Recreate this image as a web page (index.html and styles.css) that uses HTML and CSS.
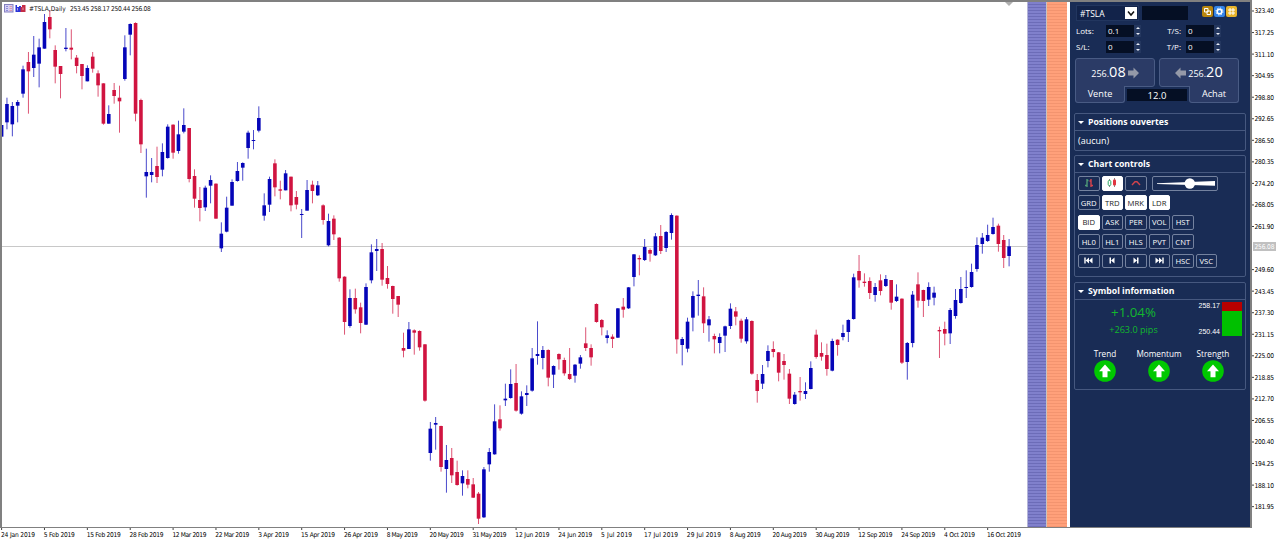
FILE: index.html
```html
<!DOCTYPE html>
<html lang="fr">
<head>
  <meta charset="UTF-8">
  <meta name="viewport" content="width=device-width, initial-scale=1.0">
  <title>#TSLA,Daily</title>
  <link rel="stylesheet" href="styles.css">
</head>
<body>
  <div class="workspace">
    <div class="plot">
      <svg id="chart" width="1025" height="525" viewBox="2 2 1025 525"></svg>
      <div class="chart-title">
        <svg class="title-icons" width="24" height="9" viewBox="0 0 24 9">
          <rect x="0.5" y="0.5" width="8.5" height="7.5" fill="#d5d0f5" stroke="#8580c0"/>
          <path d="M2 2.5h2M2 4.5h2M2 6.5h2" stroke="#5f60c8" stroke-width="0.6"/>
          <path d="M5.5 2.5h2.5M5.5 4.5h2.5M5.5 6.5h2.5" stroke="#e08a9a" stroke-width="0.8"/>
          <path d="M11.5 1h1.5v2h2V2h2v6h-5.500z" fill="#2a35d8"/>
          <path d="M16.500 3h1.500V1h3.500v7h-5z" fill="#c52c45"/>
          <path d="M13.500 4v2.500M19 3.500v2.500" stroke="#e8c8e0" stroke-width="0.7"/>
        </svg>
        <span class="chart-name">#TSLA,Daily</span>
        <span class="chart-ohlc">253.45 258.17 250.44 256.08</span>
      </div>
    </div>
    <div class="strip strip-blue"></div>
    <div class="strip strip-coral"></div>

    <div class="panel">
      <div class="symbol-row">
        <div class="symbol-select">
          <span>#TSLA</span>
          <div class="select-arrow">
            <svg width="12" height="12" viewBox="0 0 12 12"><path d="M3 4.500l3 3.500 3-3.500" fill="none" stroke="#111" stroke-width="1.500"/></svg>
          </div>
        </div>
        <div class="symbol-input"></div>
        <div class="tools">
          <svg width="11" height="11" viewBox="0 0 11 11">
            <rect width="11" height="11" rx="2" fill="#b8860f"/>
            <path d="M2.500 2.500h3.500v3.500h-3.500zM5 5h3.500v3.500h-3.500z" fill="none" stroke="#fff"/>
          </svg>
          <svg width="11" height="11" viewBox="0 0 11 11">
            <rect width="11" height="11" rx="2" fill="#3484e8"/>
            <circle cx="5.500" cy="5.500" r="2.300" fill="none" stroke="#fff" stroke-width="1.600"/>
            <circle cx="5.500" cy="5.500" r="3.500" fill="none" stroke="#fff" stroke-width="1" stroke-dasharray="1.300 1.450"/>
          </svg>
          <svg width="11" height="11" viewBox="0 0 11 11">
            <rect width="11" height="11" rx="2" fill="#e8b42c"/>
            <path d="M4 2v7M7 2v7M2 4h7M2 7h7" stroke="#fff"/>
          </svg>
        </div>
      </div>

      <div class="fields">
        <label>Lots:</label>
        <div class="field">0.1</div><div class="spin"><i></i><i></i></div>
        <label class="right">T/S:</label>
        <div class="field">0</div><div class="spin"><i></i><i></i></div>
        <label>S/L:</label>
        <div class="field">0</div><div class="spin"><i></i><i></i></div>
        <label class="right">T/P:</label>
        <div class="field">0</div><div class="spin"><i></i><i></i></div>
      </div>

      <div class="trade">
        <div class="quotes">
          <div class="quote">
            <span>256.<b>08</b></span>
            <svg width="11" height="12" viewBox="0 0 11 12"><path d="M0 3.500h5.500V0.500l5.500 5.500-5.500 5.500V8.500H0z" fill="#9499a8"/></svg>
          </div>
          <div class="quote">
            <svg width="11" height="12" viewBox="0 0 11 12"><path d="M11 3.500H5.500V0.500L0 6l5.500 5.500V8.500H11z" fill="#9499a8"/></svg>
            <span>256.<b>20</b></span>
          </div>
        </div>
        <div class="sides">
          <div class="side">Vente</div>
          <div class="spread">12.0</div>
          <div class="side">Achat</div>
        </div>
      </div>

      <div class="box positions">
        <h2>Positions ouvertes</h2>
        <p>(aucun)</p>
      </div>

      <div class="box controls">
        <h2>Chart controls</h2>
        <div class="btn-grid">
          <div class="btn-row">
            <div class="btn">
              <svg width="12" height="10" viewBox="0 0 12 10"><path d="M4 1v8M2 7.500h2M4 2.500h1.500" stroke="#4f9a78" stroke-width="1.400"/><path d="M8 1v8M6.500 3h1.500M8 7.500h2" stroke="#d8434c" stroke-width="1.400"/></svg>
            </div>
            <div class="btn on">
              <svg width="12" height="10" viewBox="0 0 12 10"><path d="M3.500 1v8M8.500 0v9" stroke="#555" stroke-width="0.700"/><rect x="2.200" y="2.500" width="2.600" height="5" rx="1" fill="#fff" stroke="#2da866"/><rect x="7" y="1.500" width="3" height="6" rx="1" fill="#e03540"/></svg>
            </div>
            <div class="btn">
              <svg width="12" height="10" viewBox="0 0 12 10"><path d="M2 7l3-3.300h2L10 7" fill="none" stroke="#d0434c" stroke-width="1.400"/></svg>
            </div>
            <div class="slider">
              <svg width="64" height="13" viewBox="0 0 64 13"><path d="M4 6.300L62 4v4.800L4 7z" fill="#fff"/><circle cx="36.800" cy="6.500" r="5.200" fill="#fff"/></svg>
            </div>
          </div>
          <div class="btn-row">
            <div class="btn">GRD</div><div class="btn on">TRD</div><div class="btn on">MRK</div><div class="btn on">LDR</div>
          </div>
          <div class="btn-row">
            <div class="btn on">BID</div><div class="btn">ASK</div><div class="btn">PER</div><div class="btn">VOL</div><div class="btn">HST</div>
          </div>
          <div class="btn-row">
            <div class="btn">HL0</div><div class="btn">HL1</div><div class="btn">HLS</div><div class="btn">PVT</div><div class="btn">CNT</div>
          </div>
          <div class="btn-row">
            <div class="btn"><svg width="9" height="7" viewBox="0 0 9 7"><path d="M0.300 0.500h1.400v6H0.300zM5 0.500v6L1.700 3.500zM8.500 0.500v6L5 3.500z" fill="#fff"/></svg></div>
            <div class="btn"><svg width="6" height="7" viewBox="0 0 6 7"><path d="M0.500 0.500H2v6H0.500zM5.500 0.500v6L2 3.500z" fill="#fff"/></svg></div>
            <div class="btn"><svg width="6" height="7" viewBox="0 0 6 7"><path d="M4 0.500h1.500v6H4zM0.500 0.500v6L4 3.500z" fill="#fff"/></svg></div>
            <div class="btn"><svg width="9" height="7" viewBox="0 0 9 7"><path d="M7.300 0.500h1.400v6H7.300zM0.500 0.500v6L4 3.500zM4 0.500v6l3.300-3z" fill="#fff"/></svg></div>
            <div class="btn">HSC</div><div class="btn">VSC</div>
          </div>
        </div>
      </div>

      <div class="box info">
        <h2>Symbol information</h2>
        <div class="stats">
          <div class="change">
            <div class="percent">+1.04%</div>
            <div class="pips">+263.0 pips</div>
          </div>
          <div class="range"><span>258.17</span><span>250.44</span></div>
          <div class="range-bar"></div>
        </div>
        <div class="signals">
          <div class="signal">Trend
            <svg width="22" height="22" viewBox="0 0 22 22"><circle cx="11" cy="11" r="10.800" fill="#00c800"/><path d="M11 4.500l6 6.800h-3.500v6h-5v-6H5z" fill="#fff"/></svg>
          </div>
          <div class="signal">Momentum
            <svg width="22" height="22" viewBox="0 0 22 22"><circle cx="11" cy="11" r="10.800" fill="#00c800"/><path d="M11 4.500l6 6.800h-3.500v6h-5v-6H5z" fill="#fff"/></svg>
          </div>
          <div class="signal">Strength
            <svg width="22" height="22" viewBox="0 0 22 22"><circle cx="11" cy="11" r="10.800" fill="#00c800"/><path d="M11 4.500l6 6.800h-3.500v6h-5v-6H5z" fill="#fff"/></svg>
          </div>
        </div>
      </div>
    </div>

    <svg id="prices" class="axis" width="28" height="528" viewBox="1252 0 28 528"></svg>
  </div>
  <svg id="dates" class="axis" width="1280" height="11" viewBox="0 528 1280 11"></svg>

  <script src="chart.js"></script>
</body>
</html>
```

FILE: styles.css
```css
body {
  margin: 0;
  width: 1280px;
  height: 539px;
  overflow: hidden;
  background: #fff;
  color: #fff;
  font-family: "Open Sans", "Noto Sans", sans-serif;
  font-size: 9px;
}

svg {
  display: block;
  flex: none;
}

.workspace {
  display: flex;
  height: 528px;
}

.plot {
  position: relative;
  box-sizing: border-box;
  width: 1027px;
  height: 528px;
  border: solid #808080;
  border-width: 2px 0 1px 2px;
}

.chart-title {
  position: absolute;
  top: 2px;
  left: 2px;
  display: flex;
  align-items: center;
  height: 9px;
  color: #111;
  font-family: "DejaVu Sans Condensed", "DejaVu Sans", sans-serif;
  font-size: 6.6px;
  white-space: nowrap;
}

.chart-name {
  width: 41px;
  margin-left: 1px;
}

.chart-ohlc {
  letter-spacing: -0.3px;
}

.axis text {
  font-family: "DejaVu Sans Condensed", "DejaVu Sans", sans-serif;
  font-size: 6.6px;
  fill: #000;
}

.strip {
  box-sizing: border-box;
  height: 528px;
  border: solid #808080;
  border-width: 2px 0 1px;
}

.strip-blue {
  width: 19px;
  background: repeating-linear-gradient(#8080cc 0 2px, #6c6cb8 2px 3px);
  box-shadow: inset 1px 0 #b4b4d8;
}

.strip-coral {
  width: 21px;
  background: repeating-linear-gradient(#ffa07a 0 2px, #f3946f 2px 3px);
  box-shadow: inset 1px 0 #c8c4c0;
}

/* trading panel */
.panel {
  box-sizing: border-box;
  width: 185px;
  height: 528px;
  padding: 3px 4px 0 4px;
  border: solid #808080;
  border-width: 2px 2px 1px 0;
  background: linear-gradient(90deg, #fff 3px, #192c55 3px);
}

.symbol-row {
  display: flex;
  height: 16px;
  margin-left: 5px;
}

.symbol-select {
  display: flex;
  box-sizing: border-box;
  align-items: center;
  justify-content: space-between;
  width: 63px;
  padding: 0 1px 0 3px;
  border: 1px solid #22365f;
  background: #12234a;
  font-size: 8.500px;
}

.select-arrow {
  background: #fff;
}

.symbol-input {
  width: 46px;
  height: 14px;
  margin: 1px 0 0 3px;
  background: #050f24;
}

.tools {
  display: flex;
  gap: 1px;
  margin: 1px 0 0 14px;
}

.fields {
  display: grid;
  grid-template-columns: 30px 28px 7px 45px 28px 7px;
  grid-auto-rows: 12px;
  row-gap: 4px;
  margin: 4px 0 0 5px;
  line-height: 12px;
  font-size: 8px;
}

.right {
  padding-right: 5px;
  text-align: right;
}

.field {
  padding-left: 2px;
  background: #050f24;
}

.spin {
  display: flex;
  flex-direction: column;
  justify-content: space-around;
  align-items: center;
  background: #24375f;
}

.spin i {
  border: solid transparent;
  border-width: 0 2px 2px;
  border-bottom-color: #e8ecf5;
}

.spin i + i {
  border-width: 2px 2px 0;
  border-top-color: #e8ecf5;
}

.trade {
  width: 164px;
  margin: 5px 0 0 4px;
}

.quotes,
.sides {
  display: flex;
  justify-content: space-between;
}

.quote {
  display: flex;
  box-sizing: border-box;
  align-items: center;
  justify-content: center;
  gap: 2px;
  width: 80px;
  height: 29px;
  border: 1px solid #495b84;
  border-radius: 3px 3px 3px 0;
  background: #2b3b66;
}

.quote:last-child {
  border-radius: 3px 3px 0 3px;
}

.quote span {
  font-size: 9px;
  line-height: 26px;
}

.quote b {
  font-size: 14.500px;
  font-weight: 400;
}

/* hangs from the quote above, hiding its bottom border */
.side {
  box-sizing: border-box;
  width: 50px;
  height: 17px;
  margin-top: -1px;
  border: solid #495b84;
  border-width: 0 1px 1px;
  border-radius: 0 0 3px 3px;
  background: #2b3b66;
  font-size: 9.2px;
  line-height: 16px;
  text-align: center;
}

.spread {
  width: 60px;
  height: 12px;
  margin-top: 2px;
  background: #050f24;
  font-size: 9.500px;
  line-height: 13px;
  text-align: center;
}

.box {
  box-sizing: border-box;
  width: 172px;
  margin-left: 3px;
  border: 1px solid #46587f;
  border-radius: 2px;
}

.box h2 {
  display: flex;
  align-items: center;
  height: 16px;
  margin: 0;
  padding-left: 3px;
  border-bottom: 1px solid #46587f;
  font-size: 8.700px;
  font-weight: 700;
}

.box h2::before {
  content: "";
  margin-right: 4px;
  border: solid transparent;
  border-width: 3px 3px 0;
  border-top-color: #fff;
}

.positions {
  height: 38px;
  margin-top: 10px;
}

.positions p {
  margin: 0;
  padding-left: 3px;
  line-height: 19px;
}

.controls {
  height: 122px;
  margin-top: 4px;
}

.btn-grid {
  display: grid;
  gap: 4.600px;
  padding: 3px 0 0 3px;
}

.btn-row {
  display: flex;
  gap: 2px;
}

.btn,
.slider {
  display: flex;
  box-sizing: border-box;
  align-items: center;
  justify-content: center;
  width: 21.500px;
  height: 14.800px;
  border: 1px solid #74829f;
  border-radius: 2px;
  font-size: 7.700px;
}

.btn.on {
  border-color: #fff;
  background: #fff;
  color: #222;
}

.slider {
  width: 66px;
  margin-left: 3px;
}

.info {
  height: 108px;
  margin-top: 5px;
}

.stats {
  display: flex;
  height: 34px;
  padding-top: 2px;
}

.change {
  width: 117px;
  color: #12b82e;
  text-align: center;
}

.percent {
  margin-top: 1px;
  font-size: 13.300px;
  line-height: 18px;
}

.pips {
  font-size: 9.1px;
  line-height: 18px;
}

.range {
  display: flex;
  flex-direction: column;
  justify-content: space-between;
  width: 28px;
  font-family: "Liberation Sans", sans-serif;
  font-size: 7px;
  line-height: 8px;
  text-align: right;
}

.range-bar {
  width: 20px;
  margin-left: 2px;
  background: linear-gradient(#b80000 9px, #00c000 9px);
}

.signals {
  display: grid;
  grid-template-columns: 54px 54px 54px;
  margin: 12px 0 0 3px;
  font-size: 8.2px;
}

.signal {
  display: flex;
  flex-direction: column;
  align-items: center;
  line-height: 12px;
}
```

FILE: chart.js
```js
const svgNs = 'http://www.w3.org/2000/svg';
const BLUE = '#0505b8';
const RED = '#d01440';
const FIRST_X = 1.6;
const STEP = 5.359;

// Candles, in thirds of a pixel below `top`: colour, high, body top, body bottom, low
const segments = [
  { top: 0, bars: `
    b375,375,410,410 b293,312,367,388 b306,318,373,409 b300,306,317,367 b197,208,281,293
    r156,186,214,341 b108,164,204,231 b116,142,191,262 b42,66,146,146 r30,51,88,115
    r136,150,200,250 r198,198,222,295 b84,143,147,154 r88,143,149,178 r165,173,198,220
    r192,192,228,268 b196,204,244,244 r156,170,206,218 r211,220,256,290 r250,250,371,374
    b316,342,371,371 r249,270,288,311 r257,293,304,398 b106,142,237,242 b70,72,104,166
    r67,69,341,364 r296,300,433,459 b446,516,529,593 b474,516,525,547 r440,498,531,549
    b430,456,509,529 b373,380,474,476 r373,374,458,476 b362,403,453,461 b325,375,395,400
    r384,384,537,547 r508,528,596,623 r561,600,624,664 b557,563,622,633 b526,540,557,610
    r550,551,656,656 b667,701,745,756 b590,623,695,697 b538,546,617,617 b486,513,543,545
    b487,489,503,542 b392,398,444,476 b390,420,422,448` },
  { top: 80, bars: `
    b79,114,152,157 b340,376,407,422 b290,297,374,396 r238,250,322,349 r302,328,332,358
    b270,280,331,331 r290,290,376,394 r333,351,374,388 b387,402,405,474 b300,330,392,392
    r302,314,333,370 b303,316,346,348 r373,376,420,434 b401,423,496,499 r406,416,463,480
    r471,473,595,605 r589,590,726,764 b628,654,738,743 r626,654,688,701 r668,682,729,760
    b610,621,734,735 b493,517,601,610 b477,507,513,573 r489,507,599,617 r558,594,612,626
    r617,618,657,701 r648,648,674,711` },
  { top: 290, bars: `
    r128,174,182,202 b96,118,177,177 r118,121,128,194 r121,123,172,182 r162,163,332,335
    b396,416,489,512 b381,399,404,479 r407,408,531,545 b465,510,537,608 r474,504,556,579
    r512,546,585,587 b541,558,580,617 r541,567,584,595 r564,583,623,624 r606,611,686,702
    b531,538,682,684 b474,486,523,545 b343,394,493,494 r346,388,415,422 b281,326,331,348
    b238,282,324,326 r222,279,362,365 b304,319,371,374 b286,309,315,348 b174,205,302,305
    b94,192,198,224 b168,180,204,238 r178,180,263,289 b226,228,254,294 r190,192,208,239
    r203,210,250,257 r174,252,267,270 b222,224,257,278 b195,202,221,236 r112,160,174,183
    r163,174,202,227 r40,42,96,98 r87,90,112,136 b121,136,144,160 r133,140,147,174
    b54,55,143,144 r24,50,59,83` },
  { top: 190, bars: `
    b291,292,355,357 b192,193,261,289 r196,204,208,256 b147,171,210,213 r175,180,191,215
    b129,139,196,198 r105,138,183,192 b123,126,174,186 b70,75,129,149 r76,77,448,491
    b441,447,465,526 b383,395,476,487 b304,318,383,424 b270,314,318,377 r292,319,400,429
    b378,388,406,455 r431,438,448,490 b430,441,459,490 b407,409,437,486 b340,356,408,417
    r351,364,380,406 r386,392,446,458 b381,388,454,461 r391,393,551,554 r552,570,603,638
    b525,552,581,597 b466,483,513,532 r454,477,486,502 r486,487,548,574 r492,513,525,569
    r537,551,626,642 b606,614,642,644 r561,603,607,632 b577,603,612,627 b514,534,597,598
    r419,434,501,506 r457,489,500,512 r461,495,537,557 b446,453,542,544 r448,449,465,497
    b404,429,441,451 b388,390,426,456 b251,262,387,389 r195,243,271,293 r250,275,279,290
    r262,273,309,327 b279,291,315,335 r253,271,303,316 b255,267,288,291 r270,270,338,359
    b283,320,333,336 r325,326,518,522 b456,459,516,569 b303,314,459,472 r247,283,332,353
    r299,300,333,381 b277,291,329,348 b290,308,323,346 r410,420,424,504 r395,417,431,466
    b354,360,430,462 b297,330,378,386 b261,297,339,341 b241,291,293,324 b221,246,291,293
    b142,165,237,245 b129,143,162,191 b104,135,153,156 b83,111,132,134 r101,107,162,185
    r135,150,204,234 b147,169,198,229` }
];

const dates = ['24 Jan', '5 Feb', '15 Feb', '28 Feb', '12 Mar', '22 Mar', '3 Apr', '15 Apr',
  '26 Apr', '8 May', '20 May', '31 May', '12 Jun', '24 Jun', '5 Jul', '17 Jul',
  '29 Jul', '8 Aug', '20 Aug', '30 Aug', '12 Sep', '24 Sep', '4 Oct', '16 Oct'];

function add(parent, tag, attrs, text) {
  const el = document.createElementNS(svgNs, tag);
  for (const key in attrs) el.setAttribute(key, attrs[key]);
  if (text) el.textContent = text;
  parent.appendChild(el);
}

// Candles
const chart = document.getElementById('chart');
add(chart, 'rect', { x: 2, y: 246, width: 1025, height: 1, fill: '#c8c8c8' });
add(chart, 'path', { d: 'M1005 2h8l-4 4z', fill: '#b0b0b0' });

let index = 0;
segments.forEach(segment => {
  segment.bars.trim().split(/\s+/).forEach(bar => {
    const fill = bar[0] === 'b' ? BLUE : RED;
    const [high, top, bottom, low] = bar.slice(1).split(',').map(v => segment.top + v / 3);
    const x = FIRST_X + index * STEP;
    add(chart, 'rect', { x: x - 0.45, y: high, width: 0.9, height: low - high, fill: fill, opacity: 0.8 });
    add(chart, 'rect', { x: x - 1.8, y: top, width: 3.6, height: Math.max(bottom - top, 1), fill: fill });
    index++;
  });
});

// Price scale
const prices = document.getElementById('prices');
for (let i = 0; i < 24; i++) {
  if (i === 11) continue; // covered by the current price
  const y = 11 + i * 21.55;
  add(prices, 'rect', { x: 1252, y: y - 0.5, width: 2, height: 1, fill: '#444' });
  add(prices, 'text', { x: 1254.5, y: y + 2.4, textLength: 19.5 }, (323.4 - i * 6.15).toFixed(2));
}
add(prices, 'rect', { x: 1253, y: 242, width: 23, height: 9, fill: '#c0c0c0' });
add(prices, 'text', { x: 1254.5, y: 249, textLength: 20, style: 'fill: #fff' }, '256.08');

// Date scale
const dateAxis = document.getElementById('dates');
dates.forEach((date, i) => {
  const x = FIRST_X + i * 8 * STEP;
  const label = date + ' 2019';
  add(dateAxis, 'rect', { x: x - 0.5, y: 528, width: 1, height: 2, fill: '#444' });
  add(dateAxis, 'text', { x: x - 0.7, y: 536.5, textLength: label.length * 3.1 }, label);
});
```
